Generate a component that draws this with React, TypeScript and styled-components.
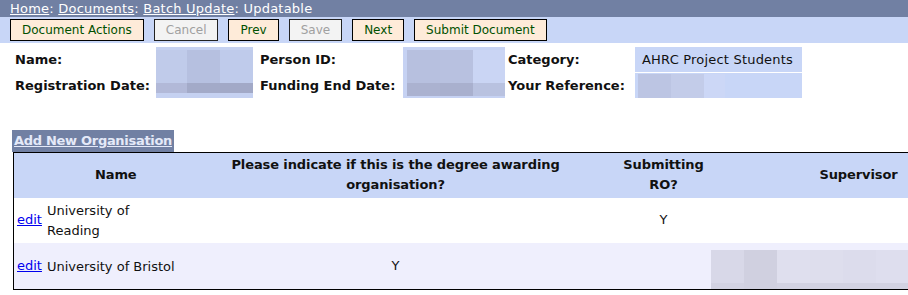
import React from "react";
import styled, { createGlobalStyle } from "styled-components";

const Global = createGlobalStyle`
  html, body { margin: 0; padding: 0; background: #fff; overflow: hidden; }
  body { font-family: "DejaVu Sans", Verdana, sans-serif; font-size: 13px; color: #000; }
`;

const Page = styled.div`
  width: 908px;
  height: 295px;
  overflow: hidden;
`;

const Breadcrumb = styled.div`
  height: 17px;
  line-height: 17px;
  background: #7180a3;
  color: #fff;
  font-size: 13px;
  letter-spacing: 0.22px;
  padding-left: 10px;
  white-space: nowrap;
`;

const Crumb = styled.a`
  color: #fff;
  text-decoration: underline;
`;

const Toolbar = styled.div`
  height: 26px;
  background: #c8d6f7;
  display: flex;
  align-items: center;
  gap: 10px;
  padding-left: 10px;
`;

const Btn = styled.button<{ $disabled?: boolean }>`
  height: 22px;
  box-sizing: border-box;
  padding: 0 11px;
  margin: 0;
  border: 1px solid ${(p) => (p.$disabled ? "#222" : "#000")};
  background: ${(p) => (p.$disabled ? "#f3f3f3" : "#feebd9")};
  color: ${(p) => (p.$disabled ? "#a0a0a0" : "#005000")};
  font-family: "DejaVu Sans", Verdana, sans-serif;
  font-size: 12px;
  line-height: 20px;
  cursor: pointer;
`;

const InfoGrid = styled.div`
  display: grid;
  grid-template-columns: 141px 97px 150px 102px 130px 167px;
  grid-template-rows: 25px 25px;
  row-gap: 1px;
  margin: 4px 0 0 15px;
`;

const Label = styled.div<{ $pad?: number }>`
  display: flex;
  align-items: center;
  font-weight: bold;
  font-size: 13px;
  padding-left: ${(p) => p.$pad ?? 0}px;
  white-space: nowrap;
  color: #111;
`;

const Value = styled.div`
  display: flex;
  align-items: center;
  background: #c8d6f7;
  padding-left: 7px;
  font-size: 13px;
  letter-spacing: 0.2px;
  color: #111;
  white-space: nowrap;
`;

const RefValue = styled.div`
  background: #c8d6f7;
  padding-left: 3px;
  display: flex;
  align-items: flex-start;
  padding-top: 1px;
`;

const Redact = styled.div<{ $bg: string; $pt: number }>`
  background: ${(p) => p.$bg};
  padding-top: ${(p) => p.$pt}px;
  box-sizing: border-box;
`;

const TileGrid = styled.div<{ $cols: string; $rows: string }>`
  display: grid;
  grid-template-columns: ${(p) => p.$cols};
  grid-template-rows: ${(p) => p.$rows};
`;

const Tile = styled.div<{ $c: string }>`
  background: ${(p) => p.$c};
`;

type TilesProps = { cols: number[]; rows: number[]; colors: string[][] };
const Tiles: React.FC<TilesProps> = ({ cols, rows, colors }) => (
  <TileGrid
    $cols={cols.map((c) => `${c}px`).join(" ")}
    $rows={rows.map((r) => `${r}px`).join(" ")}
  >
    {colors.flatMap((row, i) => row.map((c, j) => <Tile key={`${i}-${j}`} $c={c} />))}
  </TileGrid>
);

const AddBar = styled.div`
  display: flex;
  margin: 32px 0 0 12px;
`;

const AddLink = styled.a`
  display: block;
  height: 22px;
  line-height: 22px;
  padding: 0 2px;
  background: #7180a3;
  color: #e4e9f8;
  font-weight: bold;
  font-size: 13px;
  letter-spacing: -0.3px;
  text-decoration: underline;
  white-space: nowrap;
`;

const OrgTable = styled.table`
  margin-left: 13px;
  border-collapse: collapse;
  table-layout: fixed;
  width: 950px;
  border-top: 1px solid #000;
  border-left: 1px solid #000;
  border-bottom: 1px solid #000;
`;

const HeadRow = styled.tr`
  background: #c8d6f7;
  height: 45px;
`;

const Th = styled.th`
  font-weight: bold;
  font-size: 13px;
  letter-spacing: -0.1px;
  line-height: 20px;
  text-align: center;
  padding: 0 2px;
  color: #111;
`;

const Row = styled.tr<{ $alt?: boolean; $h: number }>`
  background: ${(p) => (p.$alt ? "#efeffd" : "#fff")};
  height: ${(p) => p.$h}px;
`;

const Td = styled.td<{ $center?: boolean; $top?: boolean }>`
  font-size: 13px;
  line-height: 20px;
  padding: 0;
  text-align: ${(p) => (p.$center ? "center" : "left")};
  color: #111;
  vertical-align: ${(p) => (p.$top ? "top" : "middle")};
`;

const NameCell = styled.div`
  display: flex;
  align-items: center;
  gap: 5px;
  padding-left: 3px;
`;

const EditLink = styled.a`
  color: #0000ee;
  text-decoration: underline;
`;

const OrgName = styled.span`
  max-width: 134px;
  padding-top: 2px;
`;

const SupRedact = styled.div`
  margin-left: -43px;
  margin-top: 7px;
`;

const App: React.FC = () => (
  <Page>
    <Global />
    <Breadcrumb>
      <Crumb>Home</Crumb>: <Crumb>Documents</Crumb>: <Crumb>Batch Update</Crumb>: Updatable
    </Breadcrumb>
    <Toolbar>
      <Btn>Document Actions</Btn>
      <Btn $disabled>Cancel</Btn>
      <Btn>Prev</Btn>
      <Btn $disabled>Save</Btn>
      <Btn>Next</Btn>
      <Btn>Submit Document</Btn>
    </Toolbar>
    <InfoGrid>
      <Label>Name:</Label>
      <Redact $bg="#c5d1f1" $pt={3} style={{ gridColumn: 2, gridRow: "1 / span 2" }}>
        <Tiles
          cols={[31, 33, 33]}
          rows={[33, 10]}
          colors={[
            ["#c0cbea", "#b6c0e0", "#bfcbeb"],
            ["#b2b9d8", "#a3aac8", "#a2a9c7"],
          ]}
        />
      </Redact>
      <Label $pad={7}>Person ID:</Label>
      <Redact $bg="#c6d2f3" $pt={3} style={{ gridColumn: 4, gridRow: "1 / span 2" }}>
        <Tiles
          cols={[4, 33, 33, 32]}
          rows={[33, 13]}
          colors={[
            ["#c6d2f3", "#b7c0df", "#b8c1e0", "#cad5f4"],
            ["#c6d2f3", "#abb2d0", "#a9b0ce", "#b9c2e0"],
          ]}
        />
      </Redact>
      <Label $pad={3}>Category:</Label>
      <Value>AHRC Project Students</Value>
      <Label style={{ gridColumn: 1, gridRow: 2 }}>Registration Date:</Label>
      <Label $pad={7} style={{ gridColumn: 3, gridRow: 2 }}>Funding End Date:</Label>
      <Label $pad={3} style={{ gridColumn: 5, gridRow: 2 }}>Your Reference:</Label>
      <RefValue style={{ gridColumn: 6, gridRow: 2 }}>
        <Tiles cols={[33, 33, 21]} rows={[24]} colors={[["#bcc5e3", "#c3cce9", "#ccd7f6"]]} />
      </RefValue>
    </InfoGrid>
    <AddBar>
      <AddLink>Add New Organisation</AddLink>
    </AddBar>
    <OrgTable>
      <colgroup>
        <col style={{ width: 204 }} />
        <col style={{ width: 356 }} />
        <col style={{ width: 180 }} />
        <col style={{ width: 210 }} />
      </colgroup>
      <thead>
        <HeadRow>
          <Th>Name</Th>
          <Th>Please indicate if this is the degree awarding organisation?</Th>
          <Th>
            Submitting
            <br />
            RO?
          </Th>
          <Th>Supervisor</Th>
        </HeadRow>
      </thead>
      <tbody>
        <Row $h={45}>
          <Td>
            <NameCell>
              <EditLink>edit</EditLink>
              <OrgName>University of Reading</OrgName>
            </NameCell>
          </Td>
          <Td $center></Td>
          <Td $center>Y</Td>
          <Td></Td>
        </Row>
        <Row $alt $h={46}>
          <Td>
            <NameCell>
              <EditLink>edit</EditLink>
              <OrgName>University of Bristol</OrgName>
            </NameCell>
          </Td>
          <Td $center>Y</Td>
          <Td $center></Td>
          <Td $top>
            <SupRedact>
              <Tiles
                cols={[33, 33, 33, 33, 33, 33, 33]}
                rows={[33, 6]}
                colors={[
                  ["#d8d8e8", "#d0d0e0", "#dfdfee", "#dedeed", "#dcdcec", "#dedeee", "#dedeee"],
                  ["#d2d2e2", "#d0d0e0", "#d2d2e2", "#d2d2e2", "#d2d2e2", "#d2d2e2", "#d2d2e2"],
                ]}
              />
            </SupRedact>
          </Td>
        </Row>
      </tbody>
    </OrgTable>
  </Page>
);

export default App;
